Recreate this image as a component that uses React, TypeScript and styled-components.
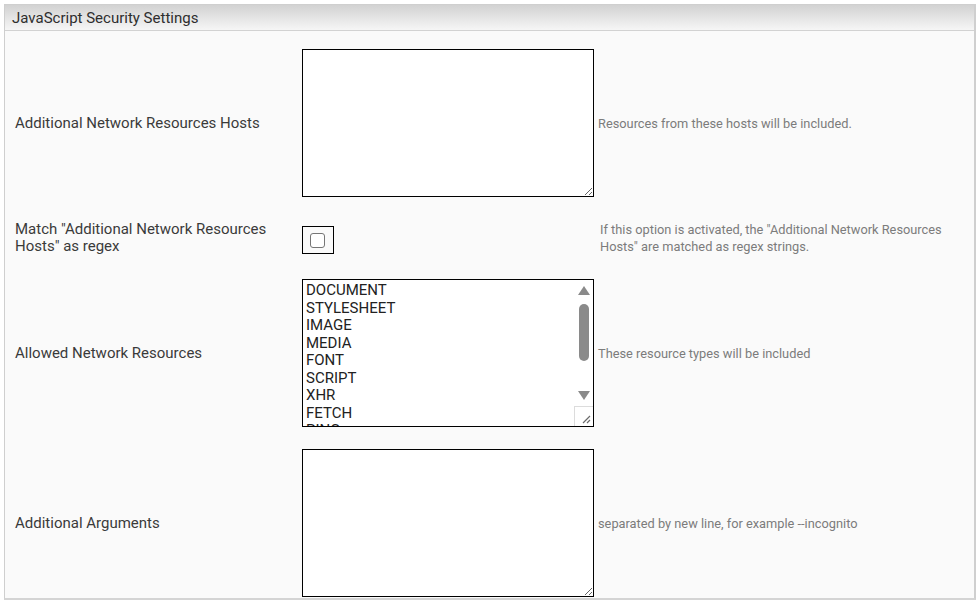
import React from 'react';
import styled, { createGlobalStyle } from 'styled-components';

const GlobalStyle = createGlobalStyle`
  html, body {
    margin: 0;
    padding: 0;
    background: #ffffff;
  }
  body {
    padding: 4px 0 0 4px;
    font-family: Roboto, 'Liberation Sans', Arial, sans-serif;
  }
`;

const Panel = styled.section`
  width: 969px;
  height: 593px;
  border: 1px solid #cfcfcf;
  border-right: 2px solid #cfcfcf;
  border-bottom: 2px solid #d4d4d4;
  background: #fafafa;
  overflow: hidden;
`;

const Header = styled.div`
  height: 25px;
  padding-left: 7px;
  display: flex;
  align-items: center;
  font-size: 15px;
  color: #2e2e2e;
  background: linear-gradient(#d2d2d2 0%, #e2e2e2 45%, #f6f6f6 100%);
  border-bottom: 1px solid #d2d2d2;
`;

const Form = styled.div`
  display: grid;
  grid-template-columns: 287px 296px 1fr;
  padding: 7px 0 0 10px;
`;

const Cell = styled.div<{ $extra?: number }>`
  display: flex;
  align-items: center;
  padding: ${(p) => 11 + (p.$extra ?? 0) / 2}px 0;
`;

const Label = styled(Cell)`
  font-size: 15px;
  line-height: 17px;
  color: #3a3a3a;
  padding-right: 16px;
`;

const Help = styled(Cell)<{ $indent?: number }>`
  font-size: 12.8px;
  line-height: 17px;
  color: #7c7c7c;
  padding-left: ${(p) => p.$indent ?? 0}px;
  padding-right: 18px;
`;

const TextArea = styled.textarea`
  box-sizing: border-box;
  width: 292px;
  height: 148px;
  margin: 0;
  border: 1px solid #000000;
  border-radius: 0;
  background: #ffffff;
  font-family: inherit;
  font-size: 14px;
  outline: none;
`;

const CheckFrame = styled.label`
  box-sizing: border-box;
  width: 32px;
  height: 28px;
  margin: 4px 0 0;
  border: 1px solid #000000;
  display: flex;
  align-items: center;
  justify-content: center;
  padding-right: 2px;
`;

const Check = styled.input`
  appearance: none;
  width: 15px;
  height: 15px;
  margin: 0;
  border: 1px solid #767676;
  border-radius: 3px;
  background: #ffffff;
`;

const ListBox = styled.div`
  box-sizing: border-box;
  width: 292px;
  height: 148px;
  border: 1px solid #000000;
  background: #ffffff;
  display: flex;
  overflow: hidden;
`;

const Options = styled.ul`
  flex: 1;
  margin: 0;
  padding: 2px 0 0 3px;
  list-style: none;
  font-size: 15px;
  line-height: 17.5px;
  color: #222222;
`;

const ScrollBar = styled.div`
  width: 19px;
  display: flex;
  flex-direction: column;
  align-items: center;
`;

const Arrow = styled.div<{ $down?: boolean }>`
  width: 0;
  height: 0;
  margin: ${(p) => (p.$down ? '4px 0 6px' : '6px 0 9px')};
  border-left: 6.5px solid transparent;
  border-right: 6.5px solid transparent;
  ${(p) => (p.$down ? 'border-top: 9px solid #8a8a8a;' : 'border-bottom: 9px solid #8a8a8a;')}
`;

const Thumb = styled.div`
  width: 10px;
  height: 57px;
  border-radius: 5px;
  background: #8a8a8a;
`;

const Track = styled.div`
  flex: 1;
`;

const Corner = styled.div`
  box-sizing: border-box;
  width: 19px;
  height: 20px;
  border-top: 1px solid #dcdcdc;
  border-left: 1px solid #dcdcdc;
  display: flex;
  align-items: flex-end;
  justify-content: flex-end;
  padding: 0 2px 2px 0;
`;

const resources = ['DOCUMENT', 'STYLESHEET', 'IMAGE', 'MEDIA', 'FONT', 'SCRIPT', 'XHR', 'FETCH', 'PING'];

function Grip() {
  return (
    <svg width="9" height="9" viewBox="0 0 9 9">
      <path d="M8 1 L1 8 M8 5 L5 8" stroke="#6a6a6a" strokeWidth="1.2" />
    </svg>
  );
}

function App() {
  return (
    <>
      <GlobalStyle />
      <Panel>
        <Header>JavaScript Security Settings</Header>
        <Form>
          <Label>Additional Network Resources Hosts</Label>
          <Cell>
            <TextArea />
          </Cell>
          <Help>Resources from these hosts will be included.</Help>

          <Label $extra={4}>Match "Additional Network Resources Hosts" as regex</Label>
          <Cell $extra={4}>
            <CheckFrame>
              <Check type="checkbox" />
            </CheckFrame>
          </Cell>
          <Help $extra={4} $indent={2}>
            If this option is activated, the "Additional Network Resources Hosts" are matched as regex strings.
          </Help>

          <Label>Allowed Network Resources</Label>
          <Cell>
            <ListBox>
              <Options>
                {resources.map((r) => (
                  <li key={r}>{r}</li>
                ))}
              </Options>
              <ScrollBar>
                <Arrow />
                <Thumb />
                <Track />
                <Arrow $down />
                <Corner>
                  <Grip />
                </Corner>
              </ScrollBar>
            </ListBox>
          </Cell>
          <Help>These resource types will be included</Help>

          <Label>Additional Arguments</Label>
          <Cell>
            <TextArea />
          </Cell>
          <Help>separated by new line, for example --incognito</Help>
        </Form>
      </Panel>
    </>
  );
}

export default App;
